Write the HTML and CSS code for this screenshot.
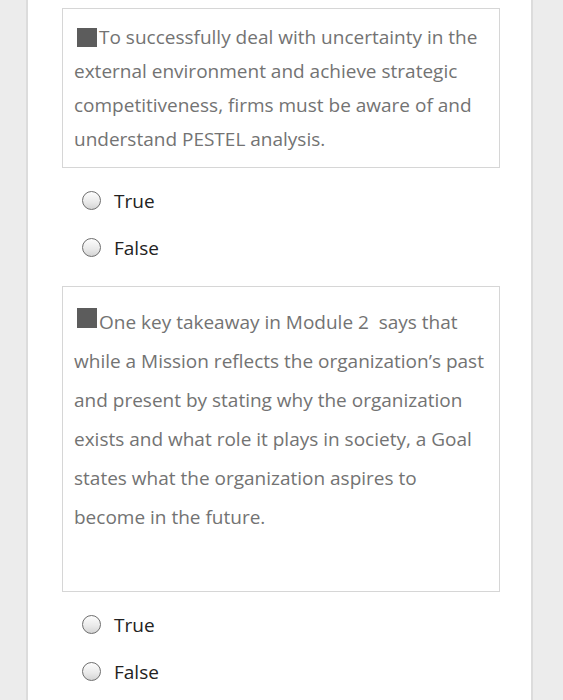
FILE: index.html
```html
<!DOCTYPE html>
<html>
<head>
<meta charset="utf-8">
<link rel="stylesheet" href="styles.css">
</head>
<body>
<div class="panel">
  <div class="question q1">
    <p><span class="mark mark1"></span>To successfully deal with uncertainty in the external environment and achieve strategic competitiveness, firms must be aware of and understand PESTEL analysis.</p>
  </div>
  <div class="options">
    <label class="option"><span class="radio"></span><span class="label">True</span></label>
    <label class="option"><span class="radio"></span><span class="label">False</span></label>
  </div>
  <div class="question q2">
    <p><span class="mark mark2"></span>One key takeaway in Module 2&nbsp; says that while a Mission reflects the organization’s past and present by stating why the organization exists and what role it plays in society, a Goal states what the organization aspires to become in the future.</p>
  </div>
  <div class="options">
    <label class="option"><span class="radio"></span><span class="label">True</span></label>
    <label class="option"><span class="radio"></span><span class="label">False</span></label>
  </div>
</div>
</body>
</html>
```
FILE: styles.css
```css
html, body {
  margin: 0;
  padding: 0;
}
body {
  background: #ececec;
  font-family: "Open Sans", "Noto Sans", sans-serif;
  height: 700px;
  overflow: hidden;
}
.panel {
  margin-left: 26px;
  width: 507px;
  height: 700px;
  background: #fff;
  border-left: 2px solid #dcdcdc;
  border-right: 2px solid #dcdcdc;
  padding: 8px 34px 0 34px;
  box-sizing: border-box;
}
.question {
  width: 438px;
  border: 1px solid #d6d6d6;
  box-sizing: border-box;
  color: #737373;
  font-size: 19px;
}
.question p {
  margin: 0;
}
.q1 {
  padding: 11px 8px 11px 11px;
  line-height: 34px;
}
.q2 {
  padding: 16px 8px 54px 11px;
  line-height: 39px;
}
.mark {
  display: inline-block;
  width: 20px;
  height: 19px;
  background: #5c5c5c;
  margin-left: 3px;
  margin-right: 2px;
}
.mark1 {
  vertical-align: -3px;
}
.mark2 {
  vertical-align: 1px;
  height: 20px;
}
.options {
  padding: 9px 0 0 20px;
  margin-bottom: 15px;
}
.option {
  display: flex;
  align-items: center;
  height: 47px;
}
.radio {
  width: 17px;
  height: 17px;
  border: 1.5px solid #6e6e6e;
  border-radius: 50%;
  background: linear-gradient(180deg, #fdfdfd 0%, #e9e9e9 60%, #d4d4d4 100%);
  margin-right: 13px;
  flex: none;
}
.label {
  color: #222;
  font-size: 19px;
}
```
